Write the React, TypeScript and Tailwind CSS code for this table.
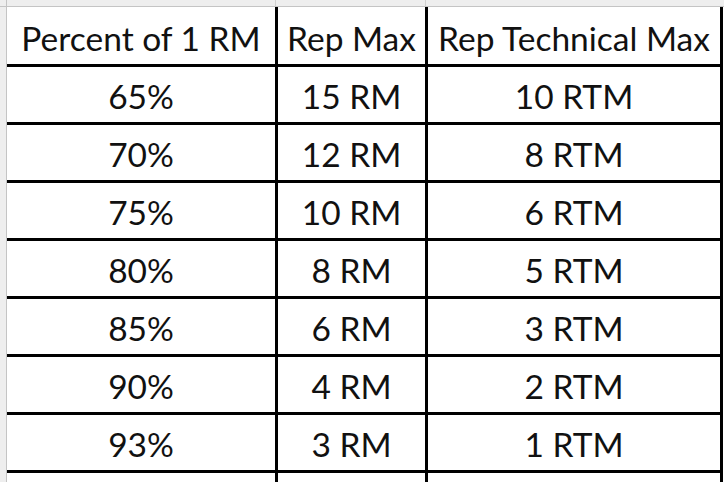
const rows: [string, string, string][] = [
  ["65%", "15 RM", "10 RTM"],
  ["70%", "12 RM", "8 RTM"],
  ["75%", "10 RM", "6 RTM"],
  ["80%", "8 RM", "5 RTM"],
  ["85%", "6 RM", "3 RTM"],
  ["90%", "4 RM", "2 RTM"],
  ["93%", "3 RM", "1 RTM"],
];

function Row({ cells, header }: { cells: [string, string, string]; header?: boolean }) {
  const h = header ? "h-[60px] pb-[9px]" : "h-[58px] pb-[9px]";
  return (
    <div className="flex">
      <div className={`w-[271px] ${h} border-r-[3px] border-b-[3px] border-black flex items-end justify-center`}>
        {cells[0]}
      </div>
      <div className={`w-[150px] ${h} border-r-[3px] border-b-[3px] border-black flex items-end justify-center`}>
        {cells[1]}
      </div>
      <div className={`w-[295px] ${h} border-r-[3px] border-b-[3px] border-black flex items-end justify-center`}>
        {cells[2]}
      </div>
    </div>
  );
}

export default function App() {
  return (
    <div
      className="w-[724px] h-[482px] bg-white overflow-hidden flex flex-col text-[33.5px] leading-none text-[#111]"
      style={{ fontFamily: "Lato, 'Liberation Sans', sans-serif" }}
    >
      {/* column header strip */}
      <div className="flex h-[7px] shrink-0 bg-[#eeeeee] border-b border-[#c4c4c4]">
        <div className="w-[7px] border-r border-[#c4c4c4]" />
        <div className="w-[269px] border-r border-[#d0d0d0]" />
        <div className="w-[150px] border-r border-[#d0d0d0]" />
        <div className="flex-1" />
      </div>
      <div className="flex flex-1">
        {/* row header gutter */}
        <div className="w-[7px] shrink-0 bg-[#eeeeee] border-r border-[#c4c4c4]" />
        <div className="flex flex-col">
          <Row cells={["Percent of 1 RM", "Rep Max", "Rep Technical Max"]} header />
          {rows.map((r) => (
            <Row key={r[0]} cells={r} />
          ))}
          <div className="flex flex-1">
            <div className="w-[271px] h-[20px] border-r-[3px] border-black" />
            <div className="w-[150px] h-[20px] border-r-[3px] border-black" />
            <div className="w-[295px] h-[20px] border-r-[3px] border-black" />
          </div>
        </div>
      </div>
    </div>
  );
}
